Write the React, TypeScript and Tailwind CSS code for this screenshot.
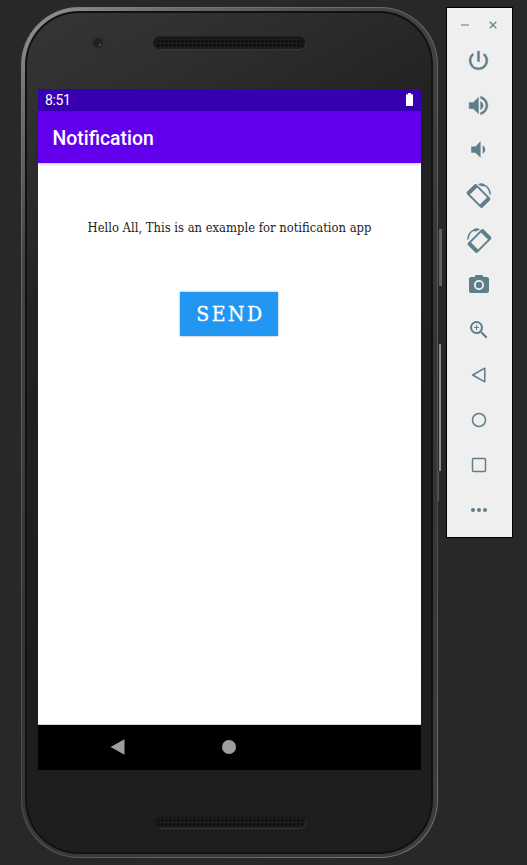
import type { ReactNode } from "react";
import { MdCameraAlt, MdVolumeDown, MdZoomIn } from "react-icons/md";

function Speaker() {
  return (
    <svg width="154" height="14" viewBox="0 0 154 14" className="block">
      <defs>
        <pattern id="mesh" width="4" height="4" patternUnits="userSpaceOnUse">
          <rect x="0.5" y="0.5" width="2" height="2" fill="#080808" />
          <rect x="2.5" y="2.5" width="1" height="1" fill="#2c2c2c" />
        </pattern>
      </defs>
      <rect x="0.5" y="0.5" width="152" height="12.500" rx="6.200" fill="#191919" stroke="#202020" />
      <path d="M6 13.500H147C150.500 13.500 153 10.500 153 6" fill="none" stroke="#3c3c3c" strokeWidth="0.800" />
      <rect x="3" y="2" width="147" height="10" rx="4" fill="url(#mesh)" />
    </svg>
  );
}

function Glyph({ d }: { d: string }) {
  return (
    <svg width="25" height="25" viewBox="0 0 24 24" className="mt-[1px]">
      <path d={d} fill="currentColor" stroke="currentColor" strokeWidth="0.4" />
    </svg>
  );
}

const POWER = "M13 3h-2v10h2V3zm4.830 2.170l-1.420 1.420A6.920 6.920 0 0 1 19 12c0 3.870-3.130 7-7 7A6.995 6.995 0 0 1 7.580 6.580L6.170 5.170A8.932 8.932 0 0 0 3 12a9 9 0 0 0 18 0c0-2.740-1.230-5.180-3.170-6.830z";
const VOLUME = "M3 9v6h4l5 5V4L7 9H3zm13.500 3A4.500 4.500 0 0 0 14 7.970v8.050c1.480-.730 2.500-2.250 2.500-4.020zM14 3.230v2.060c2.890.860 5 3.540 5 6.710s-2.110 5.850-5 6.710v2.060c4.010-.910 7-4.490 7-8.770s-2.990-7.860-7-8.770z";

function Rotate({ mirrored = false }: { mirrored?: boolean }) {
  return (
    <svg width="26" height="26" viewBox="0 0 26 26" className={mirrored ? "-scale-x-100" : ""}>
      <g transform="rotate(45 12.500 14)">
        <rect x="1.500" y="7.200" width="22" height="13.600" rx="2" fill="#607d8b" />
        <rect x="5.500" y="9" width="14" height="10" fill="#efefef" />
      </g>
      <path d="M13.500 2.300C19 1.600 24 6 24.200 12.500" fill="none" stroke="#607d8b" strokeWidth="1.400" />
      <path d="M11.800 2.200L16.800 1.200L19 4.200L15.500 4.200Z" fill="#607d8b" />
    </svg>
  );
}

function Tool({ children }: { children: ReactNode }) {
  return <div className="flex h-[45px] w-full shrink-0 items-center justify-center text-[#607d8b]">{children}</div>;
}

function Toolbar() {
  return (
    <aside className="ml-2 h-[531px] w-[67px] shrink-0 border border-black bg-[#efefef]">
      <div className="flex h-[30px] items-center justify-between pl-[14px] pr-[15px] pt-1">
        <span className="h-[2px] w-[8px] bg-[#a4b4bb]" />
        <svg width="8" height="8" viewBox="0 0 8 8"><path d="M.7.700L7.300 7.300M7.300.700L.700 7.300" stroke="#6f8893" strokeWidth="1.500" /></svg>
      </div>
      <div className="-mt-[1px] flex flex-col pr-[2px]">
        <Tool><Glyph d={POWER} /></Tool>
        <Tool><Glyph d={VOLUME} /></Tool>
        <Tool><MdVolumeDown size={25} /></Tool>
        <Tool><Rotate /></Tool>
        <Tool><Rotate mirrored /></Tool>
        <Tool><MdCameraAlt size={24} /></Tool>
        <Tool><MdZoomIn size={24} /></Tool>
        <Tool><svg width="16" height="16" viewBox="0 0 16 16"><path d="M13.800 1.200V14.800L1.700 8Z" fill="none" stroke="#607d8b" strokeWidth="1.500" strokeLinejoin="round" /></svg></Tool>
        <Tool><svg width="16" height="16" viewBox="0 0 16 16"><circle cx="8" cy="8" r="6.500" fill="none" stroke="#607d8b" strokeWidth="1.500" /></svg></Tool>
        <Tool><svg width="16" height="16" viewBox="0 0 16 16"><rect x="1.500" y="1.500" width="13" height="13" rx="1" fill="none" stroke="#607d8b" strokeWidth="1.500" /></svg></Tool>
        <Tool><svg width="16" height="4" viewBox="0 0 16 4"><g fill="#607d8b"><circle cx="2" cy="2" r="2" /><circle cx="8" cy="2" r="2" /><circle cx="14" cy="2" r="2" /></g></svg></Tool>
      </div>
    </aside>
  );
}

function Screen() {
  return (
    <div className="ml-[11px] flex h-[681px] w-[383px] flex-col bg-white">
      <div className="flex h-[22px] items-center justify-between bg-[#3700b3] pl-[7px] pr-[8px] font-['Roboto',sans-serif] text-[14px] tracking-[-0.400px] text-white">
        <span>8:51</span>
        <svg width="7" height="13" viewBox="0 0 7 13" className="-mt-[1px]"><path d="M2 0H5V1.200H6.500L7 1.700V12.500L6.500 13H.500L0 12.500V1.700L.500 1.200H2Z" fill="#fff" /></svg>
      </div>
      <header className="flex h-[52px] items-center bg-[#6200ee] pl-[14.500px] shadow-[0_1px_3px_rgba(0,0,0,0.25)]">
        <h1 className="translate-y-[2px] font-['Roboto',sans-serif] text-[19.400px] font-medium text-white">Notification</h1>
      </header>
      <div className="flex h-[562px] flex-col items-center border-b border-[#cfd6d6]">
        <p className="mt-[55px] flex h-5 items-center whitespace-nowrap font-['DejaVu_Serif_Condensed','DejaVu_Serif',serif] text-[12.900px] text-[#1c1c1c]">
          <span>Hello All, This is an example for notification app</span>
        </p>
        <button className="mr-[1px] mt-[54px] flex h-[44px] w-[98px] items-center justify-center bg-[#2196f3] pl-[3px] pt-[2px] font-['DejaVu_Serif_Condensed','DejaVu_Serif',serif] text-[21px] tracking-[2.500px] text-white shadow-[0_0_2px_rgba(30,60,110,0.500)] [-webkit-text-stroke:0.300px_white]">
          <span>SEND</span>
        </button>
      </div>
      <nav className="flex h-[45px] items-center bg-black pb-[1px] pl-[72px]">
        <svg width="15" height="16" viewBox="0 0 15 16"><path d="M.5 8L14.500.300V15.700Z" fill="#9e9e9e" /></svg>
        <span className="ml-[97px] size-[14px] rounded-full bg-[#9e9e9e]" />
      </nav>
    </div>
  );
}

export default function App() {
  return (
    <main className="flex h-[865px] w-[527px] items-start overflow-hidden bg-[#282828] pl-[21px] pt-[7px]">
      <div className="relative h-[851px] w-[417px] shrink-0 rounded-[58px] bg-[linear-gradient(150deg,#858585_0%,#777_8%,#656565_25%,#4b4b4b_70%,#777_100%)] p-[1px]">
        <div className="absolute left-[418px] top-[222px] h-[57px] w-[3px] bg-[#626262]" />
        <div className="absolute left-[418px] top-[337px] h-[127px] w-[2px] bg-[#8b8b8b]" />
        <div className="absolute left-[417px] top-[464px] h-[30px] w-[1px] bg-[#555]" />
        <div className="h-full rounded-[57px] bg-[linear-gradient(145deg,#999_0%,#707070_8%,#444_22%,#353333_55%,#3d3b3b_100%)] p-[3px] pr-[4px]">
          <div className="h-full rounded-[54px] bg-[#111] p-[2px]">
            <div className="flex h-full flex-col items-start rounded-[52px] bg-[linear-gradient(150deg,#353537_0%,#303030_10%,#232323_28%,#1d1d1d_60%,#1e1e1e_100%)]">
              <div className="flex h-[76px] w-full shrink-0 items-start">
                <div className="ml-[63px] mt-[22px] flex size-4 items-center justify-center rounded-full bg-[#303032]">
                  <div className="flex size-[10px] items-center justify-center rounded-full bg-[#202027]">
                    <div className="ml-1 mt-1 size-[2px] rounded-full bg-[#79525f]" />
                  </div>
                </div>
                <div className="ml-[47px] mt-[23px]"><Speaker /></div>
              </div>
              <Screen />
              <div className="ml-[126px] mt-[45px]"><Speaker /></div>
            </div>
          </div>
        </div>
      </div>
      <Toolbar />
    </main>
  );
}
